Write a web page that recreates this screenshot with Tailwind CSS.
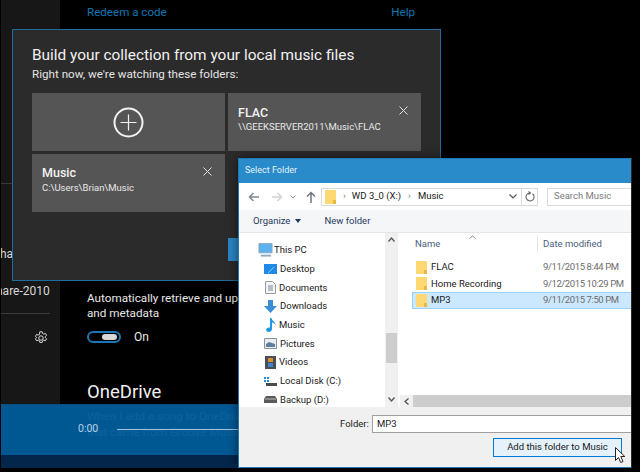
<!DOCTYPE html>
<html lang="en">
<head>
<meta charset="UTF-8">
<title>Select Folder</title>
<script src="https://cdn.jsdelivr.net/npm/@tailwindcss/browser@4"></script>
</head>
<body class="bg-black">
<div class="relative w-[640px] h-[472px] overflow-hidden bg-black font-['Roboto',sans-serif]">

  <!-- music app behind the dialogs -->
  <div class="flex h-full">
    <aside class="w-[59px] h-[404px] ml-px bg-[#171717] text-[#d8d8d8] flex flex-col overflow-hidden">
      <div class="mt-[183px] h-px w-[12px] bg-[#3a3a3a]"></div>
      <div class="mt-[62px] ml-[-1px] text-[12px] leading-[16px]">hai</div>
      <div class="mt-[21px] ml-[-5px] text-[12px] leading-[16px] whitespace-nowrap">hare-2010</div>
      <div class="mt-[14px] h-px w-[49px] bg-[#3a3a3a]"></div>
      <svg class="mt-[17px] ml-[33px]" width="14" height="14" viewBox="0 0 14 14" fill="none" stroke="#d8d8d8" stroke-width="1">
        <circle cx="7" cy="7" r="2.2"/>
        <path d="M5.8 .8h2.4l.4 1.7 1.2.6 1.6-.7 1.2 2-1.3 1.1v1.2l1.3 1.1-1.2 2-1.6-.7-1.2.6-.4 1.7H5.8l-.4-1.7-1.2-.6-1.6.7-1.2-2 1.3-1.1V6.5L1.4 5.400l1.2-2 1.600.7 1.200-.6z"/>
      </svg>
    </aside>
    <main class="pl-[27px] text-white">
      <div class="flex justify-between w-[328px] mt-[4px] text-[11.600px] leading-[17px] text-[#1077b5]">
        <span>Redeem a code</span><span>Help</span>
      </div>
      <p class="mt-[270px] w-[340px] text-[11.700px] leading-[15px] text-[#e8e8e8]">Automatically retrieve and update album art<br>and metadata</p>
      <div class="mt-[8px] flex items-center gap-[13px] text-[12px] leading-[16px] text-[#e8e8e8]">
        <div class="w-[34px] h-[12px] rounded-full border-2 border-[#1b77b5] flex items-center justify-end pr-[2px]">
          <div class="w-[15px] h-[6px] rounded-full bg-[#d8d8d8]"></div>
        </div>
        <span>On</span>
      </div>
      <h2 class="mt-[34px] text-[18.500px] leading-[27px] font-normal text-[#f0f0f0]">OneDrive</h2>
      <p class="mt-[2px] w-[340px] text-[11.700px] leading-[16px] text-white">When I add a song to OneDrive, remove<br>that came from Groove Music</p>
      <div class="mt-[12px] flex items-center gap-[13px] text-[12px] leading-[16px] text-white">
        <div class="w-[34px] h-[12px] ml-[1px]"></div><span>On</span>
      </div>
    </main>
  </div>

  <!-- now playing bar, translucent over the page -->
  <div class="absolute left-px top-[404px] w-[240px] h-[51px] bg-[#005c99]/96 border-t border-[#0a4f80]">
    <div class="flex items-center pl-[77px] pt-[17px] text-[10.500px] leading-[14px] text-[#b9d3e6]">
      <span>0:00</span>
      <div class="ml-[19px] h-px flex-1 bg-[#9ec4dd]"></div>
    </div>
  </div>
  <div class="absolute left-px top-[455px] w-[240px] h-[13px] bg-[#04264a]"></div>

  <!-- add folders dialog -->
  <div class="absolute left-[12px] top-[29px] w-[429px] h-[252px] bg-[#2b2b2b] border border-[#1f6d9f] px-[19px] pt-[14px] text-white">
    <h1 class="text-[15.400px] leading-[22px] font-normal text-[#f2f2f2]">Build your collection from your local music files</h1>
    <p class="text-[11.650px] leading-[16px] text-[#e4e4e4]">Right now, we're watching these folders:</p>
    <div class="grid grid-cols-[193px_193px] grid-rows-[58px_58px] gap-[3px] mt-[11px]">
      <div class="bg-[#555555] flex items-center justify-center">
        <svg width="31" height="31" viewBox="0 0 31 31" fill="none" stroke="#f2f2f2">
          <circle cx="15.500" cy="15.500" r="14" stroke-width="2"/>
          <path d="M15.500 7.500v16M7.500 15.500h16" stroke-width="1.200"/>
        </svg>
      </div>
      <div class="relative bg-[#555555] pl-[10px] pt-[12px]">
        <div class="text-[12.500px] leading-[15px] font-medium text-[#f2f2f2]">FLAC</div>
        <div class="text-[9.500px] leading-[14px] text-[#e8e8e8]">\\GEEKSERVER2011\Music\FLAC</div>
        <svg class="absolute right-[13px] top-[13px]" width="9" height="9" viewBox="0 0 9 9" stroke="#e0e0e0"><path d="M.5.500l8 8M8.500.500l-8 8"/></svg>
      </div>
      <div class="relative bg-[#555555] pl-[10px] pt-[11px]">
        <div class="text-[12.500px] leading-[16px] font-medium text-[#f2f2f2]">Music</div>
        <div class="text-[9.500px] leading-[14px] text-[#e8e8e8]">C:\Users\Brian\Music</div>
        <svg class="absolute right-[13px] top-[13px]" width="9" height="9" viewBox="0 0 9 9" stroke="#e0e0e0"><path d="M.5.500l8 8M8.500.500l-8 8"/></svg>
      </div>
    </div>
    <div class="absolute left-[215px] top-[208px] w-[60px] h-[23px] bg-[#2a85c4]"></div>
  </div>

  <!-- select folder window -->
  <div class="absolute left-[238px] top-[158px] w-[394px] h-[310px] flex flex-col bg-white border border-[#1f78b4] border-r-[#2a2a2a] shadow-[0_0_10px_rgba(0,0,0,0.55)] text-[#1a1a1a] text-[9.500px]">
    <div class="h-[24px] shrink-0 bg-[#2a8bca] pl-[6px] flex items-center text-[9px] text-[#e6f2fa]">Select Folder</div>

    <!-- address row -->
    <div class="h-[27px] shrink-0 flex items-center">
      <svg class="ml-[9px]" width="12" height="10" viewBox="0 0 12 10" fill="none" stroke="#7d8894" stroke-width="1.500"><path d="M11 5H1.500M5.500 1l-4 4 4 4"/></svg>
      <svg class="ml-[11px]" width="12" height="10" viewBox="0 0 12 10" fill="none" stroke="#d2d2d2" stroke-width="1.500"><path d="M1 5h9.500M6.500 1l4 4-4 4"/></svg>
      <svg class="ml-[7px]" width="6" height="4" viewBox="0 0 6 4" fill="none" stroke="#8c8c8c"><path d="M.5.500L3 3 5.500.500"/></svg>
      <svg class="ml-[10px]" width="10" height="12" viewBox="0 0 10 12" fill="none" stroke="#6f7680" stroke-width="1.500"><path d="M5 12V1.500M1 5.500l4-4 4 4"/></svg>
      <div class="ml-[5px] w-[201px] h-[18px] border border-[#d9d9d9] flex items-center">
        <svg class="ml-[3px]" width="11" height="14" viewBox="0 0 11 14"><path d="M0 0h11v14H0z" fill="#fdd873"/><path d="M8 10h3v4H8z" fill="#e8b93f"/></svg>
        <span class="ml-[7px] text-[#777]">›</span>
        <span class="ml-[6px] whitespace-nowrap">WD 3_0 (X:)</span>
        <span class="ml-[7px] text-[#777]">›</span>
        <span class="ml-[7px]">Music</span>
        <svg class="ml-auto mr-[4px]" width="8" height="5" viewBox="0 0 8 5" fill="none" stroke="#555" stroke-width="1.200"><path d="M.5.500L4 4 7.500.500"/></svg>
      </div>
      <div class="w-[16px] h-[18px] border border-l-0 border-[#d9d9d9] flex items-center justify-center">
        <svg width="10" height="11" viewBox="0 0 10 11" fill="none" stroke="#666" stroke-width="1.100"><path d="M7.500 2.800a4 4 0 1 1-3-.8M3.500 .5l2 1.500-2 1.500"/></svg>
      </div>
      <div class="ml-[9px] flex-1 h-[18px] border border-r-0 border-[#d9d9d9] pl-[6px] flex items-center text-[#7a7a7a]">Search Music</div>
    </div>

    <!-- toolbar -->
    <div class="h-[23px] shrink-0 bg-[#f5f6f7] border-b border-[#e6e6e6] flex items-center text-[#1e3a5f]">
      <span class="ml-[14px]">Organize</span>
      <span class="ml-[5px] w-0 h-0 border-x-[3.500px] border-x-transparent border-t-[4px] border-t-[#1e3a5f]"></span>
      <span class="ml-[23px]">New folder</span>
    </div>

    <!-- panes -->
    <div class="h-[174px] shrink-0 flex relative">
      <ul class="w-[146px] shrink-0 pt-[8px]">
        <li class="h-[18.700px] flex items-center pl-[19px] gap-[1px]">
          <svg width="15" height="14" viewBox="0 0 16 14"><path d="M1 0h14v10H1z" fill="#5cb2ee"/><path d="M1 0h14v10H1z" fill="none" stroke="#8fa9c0"/><path d="M3 13h11" stroke="#8fa9c0" stroke-width="2"/></svg>
          <span>This PC</span>
        </li>
        <li class="h-[18.700px] flex items-center pl-[25px]">
          <svg width="13" height="10" viewBox="0 0 13 10"><path d="M0 0h13v10H0z" fill="#1f8be6"/><path d="M4 9l6-6" stroke="#8cc8f5"/></svg>
          <span class="ml-[3px]">Desktop</span>
        </li>
        <li class="h-[18.700px] flex items-center pl-[26px]">
          <svg width="11" height="13" viewBox="0 0 11 13"><path d="M.5.500h7l3 3v9H.500z" fill="#f2f4f6" stroke="#9a9a9a"/><path d="M3 5h5M3 7h5M3 9h5" stroke="#7a8a99"/></svg>
          <span class="ml-[3px]">Documents</span>
        </li>
        <li class="h-[18.700px] flex items-center pl-[25px]">
          <svg width="13" height="13" viewBox="0 0 13 13"><path d="M4 0h5v6h4l-6.500 7L0 6h4z" fill="#3b8fd6"/></svg>
          <span class="ml-[3px]">Downloads</span>
        </li>
        <li class="h-[18.700px] flex items-center pl-[27px]">
          <svg width="10" height="14" viewBox="0 0 10 14"><path d="M4 0h1.500c.3 2.500 4 3.500 4 7-.8-1.500-2-2.300-3.500-2.500V11c0 1.700-1.500 3-3.200 3C1.200 14 0 13 0 11.800 0 10.500 1.500 9.500 3 9.500c.4 0 .7 0 1 .1z" fill="#1f9be6"/></svg>
          <span class="ml-[3px]">Music</span>
        </li>
        <li class="h-[18.700px] flex items-center pl-[25px]">
          <svg width="13" height="11" viewBox="0 0 13 11"><path d="M.5.500h12v10H.500z" fill="#e8eef3" stroke="#8c9298"/><path d="M2 6l3-2 6 2v3H2z" fill="#5f7f9c"/></svg>
          <span class="ml-[3px]">Pictures</span>
        </li>
        <li class="h-[18.700px] flex items-center pl-[26px]">
          <svg width="11" height="13" viewBox="0 0 11 13"><path d="M0 0h11v13H0z" fill="#4a4f55"/><path d="M3 2h5v4H3z" fill="#d9902f"/><path d="M3 7h5v4H3z" fill="#3f86c9"/></svg>
          <span class="ml-[3px]">Videos</span>
        </li>
        <li class="h-[18.700px] flex items-center pl-[25px]">
          <svg width="13" height="11" viewBox="0 0 13 11"><path d="M0 1h2v2H0zM3 1h2v2H3zM0 4h2v2H0zM3 4h2v2H3z" fill="#1f8be6"/><path d="M2 7h11v3H2z" fill="#4a4a4a"/></svg>
          <span class="ml-[3px]">Local Disk (C:)</span>
        </li>
        <li class="h-[18.700px] flex items-center pl-[25px]">
          <svg width="13" height="7" viewBox="0 0 13 7"><path d="M2 0h9l2 3v4H0V3z" fill="#5a5a5a"/><path d="M1 3h11" stroke="#bdbdbd"/></svg>
          <span class="ml-[3px]">Backup (D:)</span>
        </li>
      </ul>

      <!-- nav pane scrollbar -->
      <div class="w-[13px] shrink-0 bg-[#f0f0f0] flex flex-col items-center pt-[4px]">
        <svg width="7" height="5" viewBox="0 0 7 5" fill="none" stroke="#555" stroke-width="1.300"><path d="M.5 4.500L3.500 1l3 3.500"/></svg>
        <div class="mt-[91px] w-[11px] h-[30px] bg-[#cdcdcd]"></div>
        <svg class="mt-[34px]" width="7" height="5" viewBox="0 0 7 5" fill="none" stroke="#555" stroke-width="1.300"><path d="M.5.500l3 3.500 3-3.500"/></svg>
      </div>

      <!-- file list -->
      <div class="flex-1 min-w-0 flex flex-col relative">
        <svg class="absolute left-[71px] top-[2px]" width="7" height="4" viewBox="0 0 7 4" fill="none" stroke="#8c8c8c"><path d="M.5 3.500L3.500 1l3 2.500"/></svg>
        <div class="h-[20px] pt-[2px] flex items-center text-[#4c607a]">
          <span class="ml-[17px] w-[122px]">Name</span>
          <span class="border-l border-[#e5e5e5] pl-[5px] h-full flex items-center">Date modified</span>
        </div>
        <div class="mt-[6px] flex flex-col pl-[14px] flex-1">
          <div class="h-[16.500px] flex items-center">
            <svg class="ml-[4px]" width="11" height="13" viewBox="0 0 11 13"><path d="M0 0h11v13H0z" fill="#fdd873"/><path d="M8 9h3v4H8z" fill="#e8b93f"/></svg>
            <span class="ml-[4px] w-[112px]">FLAC</span><span class="text-[#6d6d6d] whitespace-nowrap tracking-[-0.4px]">9/11/2015 8:44 PM</span>
          </div>
          <div class="h-[16.500px] flex items-center">
            <svg class="ml-[4px]" width="11" height="13" viewBox="0 0 11 13"><path d="M0 0h11v13H0z" fill="#fdd873"/><path d="M8 9h3v4H8z" fill="#e8b93f"/></svg>
            <span class="ml-[4px] w-[112px]">Home Recording</span><span class="text-[#6d6d6d] whitespace-nowrap tracking-[-0.4px]">9/12/2015 10:29 PM</span>
          </div>
          <div class="h-[16.500px] flex items-center bg-[#cce8ff] border border-[#99d1ff] border-r-0">
            <svg class="ml-[3px]" width="11" height="13" viewBox="0 0 11 13"><path d="M0 0h11v13H0z" fill="#fdd873"/><path d="M8 9h3v4H8z" fill="#e8b93f"/></svg>
            <span class="ml-[4px] w-[112px]">MP3</span><span class="text-[#6d6d6d] whitespace-nowrap tracking-[-0.4px]">9/11/2015 7:50 PM</span>
          </div>
        </div>
        <div class="h-[12px] ml-[2px] bg-[#f0f0f0] flex items-center">
          <svg class="ml-[4px]" width="5" height="7" viewBox="0 0 5 7" fill="none" stroke="#555" stroke-width="1.300"><path d="M4.500.500L1 3.500l3.500 3"/></svg>
          <div class="ml-[4px] flex-1 h-full bg-[#cdcdcd]"></div>
        </div>
      </div>
    </div>

    <!-- footer -->
    <div class="flex-1 bg-[#f0f0f0] relative pt-[8px]">
      <div class="flex items-center">
        <span class="ml-[101px] w-[32px]">Folder:</span>
        <div class="flex-1 h-[18px] bg-white border border-[#a0a0a0] border-r-0 pl-[4px] flex items-center">MP3</div>
      </div>
      <div class="ml-[254px] mt-[5px] w-[129px] h-[19px] bg-[#e5f1fb] border border-[#0078d7] flex items-center justify-center">Add this folder to Music</div>
    </div>
  </div>

  <!-- mouse pointer -->
  <svg class="absolute left-[615px] top-[447px]" width="11" height="17" viewBox="0 0 11 17"><path d="M.5.500v13l3-3 2.200 5 2.300-1-2.200-5h4z" fill="#fff" stroke="#222"/></svg>
</div>
</body>
</html>
